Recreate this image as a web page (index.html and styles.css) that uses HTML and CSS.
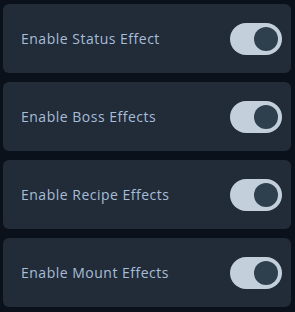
FILE: index.html
```html
<!DOCTYPE html>
<html>
<head>
<meta charset="utf-8">
<link rel="stylesheet" href="styles.css">
</head>
<body>
<div class="list">
  <div class="card"><span class="label">Enable Status Effect</span><span class="toggle"><span class="knob"></span></span></div>
  <div class="card"><span class="label">Enable Boss Effects</span><span class="toggle"><span class="knob"></span></span></div>
  <div class="card"><span class="label">Enable Recipe Effects</span><span class="toggle"><span class="knob"></span></span></div>
  <div class="card"><span class="label">Enable Mount Effects</span><span class="toggle"><span class="knob"></span></span></div>
</div>
</body>
</html>
```
FILE: styles.css
```css
html, body {
  margin: 0;
  background: #0b111a;
}
body {
  width: 295px;
  height: 312px;
  overflow: hidden;
}
.list {
  display: flex;
  flex-direction: column;
  gap: 9px;
  padding: 4px 4px 0 3px;
}
.card {
  height: 69px;
  box-sizing: border-box;
  background: #222b38;
  border-radius: 6px;
  display: flex;
  align-items: center;
  justify-content: space-between;
  padding: 0 9px 0 18px;
}
.label {
  font-family: "Open Sans", sans-serif;
  font-size: 14px;
  color: #a6bed8;
  letter-spacing: 0.5px;
}
.toggle {
  width: 52px;
  height: 32px;
  border-radius: 16px;
  background: #c3cfdb;
  display: flex;
  align-items: center;
  justify-content: flex-end;
  padding: 0 4px;
  box-sizing: border-box;
}
.knob {
  width: 24px;
  height: 24px;
  border-radius: 50%;
  background: #2e3f4d;
}
```
